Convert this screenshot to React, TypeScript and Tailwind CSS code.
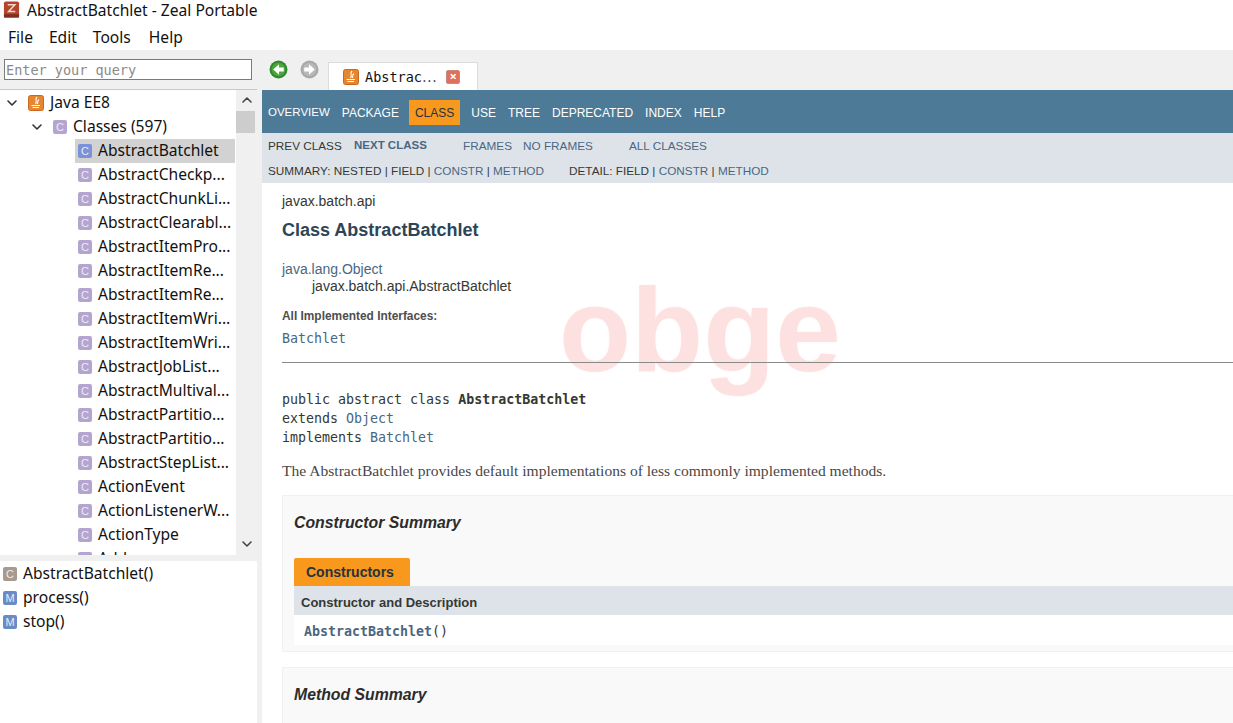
import { ChevronDown, ChevronUp } from 'lucide-react'

const classes = [
  'AbstractCheckp...',
  'AbstractChunkLi...',
  'AbstractClearabl...',
  'AbstractItemPro...',
  'AbstractItemRe...',
  'AbstractItemRe...',
  'AbstractItemWri...',
  'AbstractItemWri...',
  'AbstractJobList...',
  'AbstractMultival...',
  'AbstractPartitio...',
  'AbstractPartitio...',
  'AbstractStepList...',
  'ActionEvent',
  'ActionListenerW...',
  'ActionType',
  'Add...',
]

const uiFont = "font-['Noto_Sans',sans-serif]"
const docFont = "font-['Liberation_Sans',sans-serif]"
const monoFont = "font-['DejaVu_Sans_Mono',monospace]"

function Badge({ letter, className }: { letter: string; className: string }) {
  return (
    <span
      className={`flex h-[14px] w-[14px] shrink-0 items-center justify-center rounded-[2px] font-['Liberation_Sans',sans-serif] text-[11px] leading-none text-[#eeeaf6] ${className}`}
    >
      {letter}
    </span>
  )
}

function JavaIcon() {
  return (
    <svg viewBox="0 0 16 16" className="h-[16px] w-[16px] shrink-0">
      <rect x="0.5" y="0.5" width="15" height="15" rx="2" fill="#e8862e" stroke="#c9681c" />
      <path d="M9 2 C6 5 10 6 7.500 9 M11 4.500 C9 6 10 7 9.500 9" stroke="#fff" strokeWidth="1.100" fill="none" />
      <path d="M3.500 10.500 H12 M4.500 12.500 H11" stroke="#fff" strokeWidth="1.200" />
    </svg>
  )
}

function BackArrow({ active }: { active: boolean }) {
  const ring = active ? '#2f8a2f' : '#a8a8a8'
  return (
    <svg viewBox="0 0 18 18" className="h-[19px] w-[19px]">
      <circle cx="9" cy="9" r="8.500" fill={ring} />
      <circle cx="9" cy="9" r="6.500" fill={active ? '#4aa83a' : '#b8b8b8'} />
      <path
        d={active ? 'M9.500 4 L4 9 L9.500 14 V11 H14 V7 H9.500 Z' : 'M8.500 4 L14 9 L8.500 14 V11 H4 V7 H8.500 Z'}
        fill="#fff"
      />
    </svg>
  )
}

function Sidebar() {
  return (
    <aside className={`flex w-[257px] shrink-0 flex-col bg-[#f0f0f0] ${uiFont}`}>
      <div className="flex h-[39px] shrink-0 items-start px-[4px] pt-[9px]">
        <div className={`flex h-[21px] w-[248px] items-center border border-[#7a7a7a] bg-white pl-[1px] pt-[1px] text-[13.500px] text-[#8a8a8a] ${monoFont}`}>
          Enter your query
        </div>
      </div>

      <div className="flex h-[466px] shrink-0 overflow-hidden border-t border-[#c8c8c8] bg-white">
        <div className="relative flex-1 overflow-hidden pt-[1px]">
          <div className="flex h-[24px] items-center text-[15.600px] text-[#111]">
            <ChevronDown size={16} strokeWidth={2.4} className="ml-[4px] text-[#333]" />
            <span className="ml-[8px]">
              <JavaIcon />
            </span>
            <span className="ml-[6px]">Java EE8</span>
          </div>
          <div className="flex h-[24px] items-center text-[15.600px] text-[#111]">
            <ChevronDown size={16} strokeWidth={2.4} className="ml-[29px] text-[#333]" />
            <Badge letter="C" className="ml-[8px] bg-[#b3a5d0]" />
            <span className="ml-[6px]">Classes (597)</span>
          </div>
          <div className="ml-[75px] mr-[1px] flex h-[24px] items-center bg-[#d2d2d2] pl-[3px] text-[15.600px] text-[#111]">
            <Badge letter="C" className="bg-[#7a92d8]" />
            <span className="ml-[6px]">AbstractBatchlet</span>
          </div>
          {classes.map((name, i) => (
            <div key={i} className="ml-[75px] flex h-[24px] items-center pl-[3px] text-[15.600px] text-[#111]">
              <Badge letter="C" className="bg-[#b3a5d0]" />
              <span className="ml-[6px] whitespace-nowrap">{name}</span>
            </div>
          ))}
        </div>
        <div className="flex w-[21px] shrink-0 flex-col items-center bg-[#f0f0f0]">
          <ChevronUp size={16} strokeWidth={2.4} className="mt-[2px] h-[16px] text-[#444]" />
          <div className="mr-[2px] mt-[3px] h-[22px] w-[19px] bg-[#cdcdcd]" />
          <div className="flex-1" />
          <ChevronDown size={16} strokeWidth={2.4} className="mb-[3px] text-[#444]" />
        </div>
      </div>

      <div className="h-[6px] shrink-0" />

      <div className="flex-1 bg-white pt-[1px] text-[15.600px] text-[#111]">
        <div className="flex h-[24px] items-center pl-[3px]">
          <Badge letter="C" className="bg-[#a89a8c]" />
          <span className="ml-[6px]">AbstractBatchlet()</span>
        </div>
        <div className="flex h-[24px] items-center pl-[3px]">
          <Badge letter="M" className="bg-[#6a8cc4]" />
          <span className="ml-[6px]">process()</span>
        </div>
        <div className="flex h-[24px] items-center pl-[3px]">
          <Badge letter="M" className="bg-[#6a8cc4]" />
          <span className="ml-[6px]">stop()</span>
        </div>
      </div>
    </aside>
  )
}

function TabBar() {
  return (
    <div className="flex h-[40px] shrink-0 items-start bg-[#f0f0f0] pl-[7px]">
      <div className="mt-[10px] flex gap-[12px]">
        <BackArrow active />
        <BackArrow active={false} />
      </div>
      <div className="ml-[9px] mt-[12px] flex h-[28px] w-[150px] items-center border border-b-0 border-[#dcdcdc] bg-white pl-[14px]">
        <JavaIcon />
        <span className={`ml-[6px] text-[13.500px] text-[#111] ${monoFont}`}>
          Abstrac<span className="font-['Noto_Sans_CJK_SC',sans-serif]">⋯</span>
        </span>
        <span className="ml-[10px] flex h-[14px] w-[14px] items-center justify-center rounded-[2px] border border-[#c98a7c] bg-[#e0705c] text-[13px] font-bold leading-none text-white">
          ×
        </span>
      </div>
    </div>
  )
}

function DocNav() {
  return (
    <div className={`text-[11.750px] ${docFont}`}>
      <div className="flex h-[43px] items-center bg-[#4d7a97] pl-[6px] pt-[2px] text-[12px] text-white">
        <span className="text-[11.500px]">OVERVIEW</span>
        <span className="ml-[12px]">PACKAGE</span>
        <span className="ml-[10px] flex h-[25px] items-center bg-[#f8981d] px-[6px] text-[#253441]">CLASS</span>
        <span className="ml-[11px]">USE</span>
        <span className="ml-[12px]">TREE</span>
        <span className="ml-[12px]">DEPRECATED</span>
        <span className="ml-[12px]">INDEX</span>
        <span className="ml-[12px]">HELP</span>
      </div>
      <div className="h-[50px] bg-[#dee3e9] pl-[6px] text-[#353833]">
        <div className="flex h-[25px] items-center pt-[1px]">
          <span className="w-[86px]">PREV CLASS</span>
          <span className="w-[109px] text-[11.500px] font-bold text-[#4a6782]">NEXT CLASS</span>
          <span className="w-[60px] text-[#4a6782]">FRAMES</span>
          <span className="w-[106px] text-[#4a6782]">NO FRAMES</span>
          <span className="text-[#4a6782]">ALL CLASSES</span>
        </div>
        <div className="flex h-[25px] items-center whitespace-pre">
          <span>SUMMARY: NESTED | FIELD | </span>
          <span className="text-[#4a6782]">CONSTR</span>
          <span> | </span>
          <span className="text-[#4a6782]">METHOD</span>
          <span className="ml-[25px]">DETAIL: FIELD | </span>
          <span className="text-[#4a6782]">CONSTR</span>
          <span> | </span>
          <span className="text-[#4a6782]">METHOD</span>
        </div>
      </div>
    </div>
  )
}

function DocBody() {
  return (
    <div className="relative flex-1 overflow-hidden bg-white pl-[20px]">
      <div className={`mt-[10px] text-[14px] leading-[16px] text-[#353833] ${docFont}`}>javax.batch.api</div>
      <h1 className={`mt-[10px] text-[18px] font-bold leading-[22px] text-[#2c4557] ${docFont}`}>Class AbstractBatchlet</h1>
      <div className={`mt-[20px] text-[14px] leading-[17px] text-[#353833] ${docFont}`}>
        <div className="text-[#4a6782]">java.lang.Object</div>
        <div className="pl-[30px]">javax.batch.api.AbstractBatchlet</div>
      </div>
      <div className={`mt-[13px] text-[11.900px] font-bold leading-[16px] text-[#4e4e4e] ${docFont}`}>All Implemented Interfaces:</div>
      <div className={`mt-[6px] text-[13.300px] leading-[17px] text-[#4a6782] ${monoFont}`}>Batchlet</div>
      <div className="relative z-10 mt-[15px] h-[1px] bg-[#8a8a8a]" />

      <div className={`relative z-10 mt-[26.500px] h-[58px] text-[13.300px] leading-[19.300px] text-[#353833] ${monoFont}`}>
        <div>
          public abstract class <b>AbstractBatchlet</b>
        </div>
        <div>
          extends <span className="text-[#4a6782]">Object</span>
        </div>
        <div>
          implements <span className="text-[#4a6782]">Batchlet</span>
        </div>
      </div>
      <p className="mt-[14px] font-['Liberation_Serif',serif] text-[15.570px] leading-[18px] text-[#474747]">
        The AbstractBatchlet provides default implementations of less commonly implemented methods.
      </p>

      <section className={`mt-[15px] h-[157px] border border-r-0 border-[#f0f0f0] bg-[#f9f9f9] pl-[11px] ${docFont}`}>
        <h3 className="mt-[17px] text-[15.800px] font-bold italic leading-[19px] text-[#2c2c2c]">Constructor Summary</h3>
        <div className="mt-[26px] flex h-[28px] w-[116px] items-center rounded-t-[2px] bg-[#f8981d] pl-[12px] pt-[2px] text-[14px] font-bold text-[#253441]">
          Constructors
        </div>
        <div className="flex h-[29px] items-center bg-[#dee3e9] pl-[7px] pt-[6px] text-[13px] font-bold text-[#353833]">
          Constructor and Description
        </div>
        <div className={`flex h-[30px] items-center bg-white pl-[10px] pt-[5px] text-[13.300px] text-[#353833] ${monoFont}`}>
          <b className="text-[#4a6782]">AbstractBatchlet</b>()
        </div>
      </section>

      <section className={`mt-[15px] h-[60px] border border-r-0 border-[#f0f0f0] bg-[#f9f9f9] pl-[11px] ${docFont}`}>
        <h3 className="mt-[17px] text-[15.800px] font-bold italic leading-[19px] text-[#2c2c2c]">Method Summary</h3>
      </section>

      <div className="pointer-events-none absolute left-[297px] top-[88px] font-['Liberation_Sans',sans-serif] text-[118px] font-bold leading-none text-[#fde0e0] [text-shadow:0_0_3px_#fff3f3]">
        obge
      </div>
    </div>
  )
}

export default function App() {
  return (
    <div className="flex h-[723px] w-[1233px] flex-col overflow-hidden bg-white">
      <div className={`flex h-[19px] shrink-0 items-center bg-white pl-[3px] pt-[1px] text-[15.600px] leading-[18px] text-[#111] ${uiFont}`}>
        <svg viewBox="0 0 18 18" className="-mt-[1px] h-[17px] w-[17px]">
          <rect x="1" y="0.500" width="16" height="17" rx="2" fill="#b5432e" />
          <rect x="1" y="14" width="16" height="3.500" fill="#7c2f22" />
          <path d="M5 4 H12.500 L6 11 H13" stroke="#f3d7c8" strokeWidth="1.600" fill="none" />
        </svg>
        <span className="ml-[7px]">AbstractBatchlet - Zeal Portable</span>
      </div>
      <div className={`flex h-[31px] shrink-0 items-center gap-[16px] bg-white pl-[8px] pt-[7px] text-[15.600px] text-[#111] ${uiFont}`}>
        <span>File</span>
        <span>Edit</span>
        <span>Tools</span>
        <span className="ml-[2px]">Help</span>
      </div>
      <div className="flex min-h-0 flex-1 bg-[#f0f0f0]">
        <Sidebar />
        <div className="w-[5px] shrink-0" />
        <main className="flex min-w-0 flex-1 flex-col">
          <TabBar />
          <DocNav />
          <DocBody />
        </main>
      </div>
    </div>
  )
}
